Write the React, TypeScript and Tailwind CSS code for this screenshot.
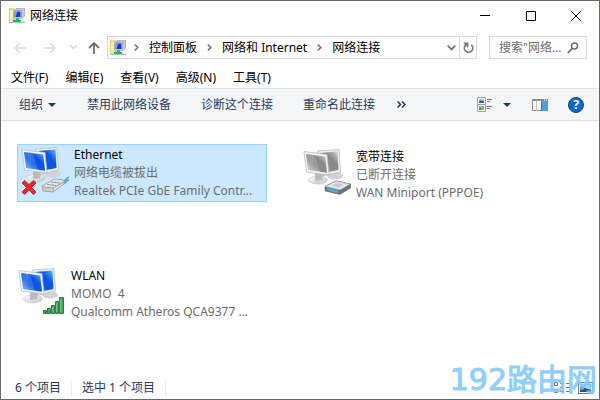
import type { ReactNode } from "react";

function FolderNetIcon() {
  return (
    <svg width="16" height="16" viewBox="0 0 16 16" aria-hidden="true">
      <path d="M0 1h6v11H0z" fill="#f6dc7c" stroke="#cfae45" strokeWidth="0.8" />
      <path d="M1 3l4-2v10l-4 1z" fill="#fdf0a8" />
      <path d="M7 .5l8.5-.3v8L13 10H8z" fill="#c4ccd6" stroke="#8f9aa8" strokeWidth="0.7" />
      <path d="M4.500 2.500h8v7.500h-8z" fill="#dfe5ec" stroke="#8d99a8" strokeWidth="0.7" />
      <path d="M5.500 3.500h6v5.500h-6z" fill="#1238c8" />
      <path d="M5.500 3.500h3l-2 5.500h-1z" fill="#7da5f5" />
      <path d="M7 10h3v3H7z" fill="#1fc27a" />
      <path d="M4 12h8v2.500H4z" fill="#17b56d" />
      <path d="M0 13.500h4v1.500H0zM12 13.500h4v1.500h-4z" fill="#b8bdc2" />
    </svg>
  );
}

function Arrow({ dir }: { dir: "left" | "right" }) {
  return (
    <svg width="12" height="12" viewBox="0 0 12 12" fill="none" stroke="#dcdcdc" strokeWidth="1.5" aria-hidden="true">
      <path d={dir === "left" ? "M12 6H1M6 1L1 6l5 5" : "M0 6h11M6 1l5 5-5 5"} />
    </svg>
  );
}

function Chevron() {
  return (
    <svg width="5" height="7" viewBox="0 0 5 7" fill="none" stroke="#777" strokeWidth="1.6" aria-hidden="true">
      <path d="M.8.6l3 2.900-3 2.900" />
    </svg>
  );
}

function Monitors({ id, tone, children }: { id: string; tone: "blue" | "gray"; children: ReactNode }) {
  const blue = tone === "blue";
  const a = blue ? "#0c55e6" : "#8a8a8a";
  const b = blue ? "#6cbcff" : "#dcdcdc";
  const edge = blue ? "#b8c2ca" : "#b9b9b9";
  return (
    <svg width="48" height="50" viewBox="0 0 48 50" className="shrink-0" aria-hidden="true">
      <defs>
        <linearGradient id={id} x1="0" y1="1" x2="1" y2="0">
          <stop offset="0" stopColor={b} />
          <stop offset="0.4" stopColor={a} />
          <stop offset="0.65" stopColor={a} />
          <stop offset="1" stopColor={b} />
        </linearGradient>
        <linearGradient id={id + "s"} x1="0" y1="0" x2="1" y2="1">
          <stop offset="0" stopColor="#fff" />
          <stop offset="1" stopColor="#c1c4c6" />
        </linearGradient>
      </defs>
      <ellipse cx="32" cy="28" rx="8" ry="3.500" fill="#d0d4d7" />
      <path d="M14.500 3L36 1.500l1.500 22.500-17 4z" fill="#edf0f2" stroke={edge} strokeWidth="0.8" />
      <path d="M17 5l17.500-1.500 1 18.500-15 3z" fill={`url(#${id})`} />
      <ellipse cx="15" cy="32" rx="9.500" ry="4" fill={`url(#${id}s)`} stroke={edge} strokeWidth="0.5" />
      <path d="M12 25l8 1-1 6-7 1z" fill="#b6bbbf" />
      <path d="M1 3.500L24 6.500l2 20.500L3.500 24z" fill="#f4f5f6" stroke={edge} strokeWidth="0.8" />
      <path d="M3 6l19.200 2.500 1.800 16.200L5.200 22z" fill={`url(#${id})`} />
      <path d="M3 6l7 1-1 15.300-3.800-.5z" fill="#fff" opacity="0.18" />
      <path d="M9 7l3 .4 5 16.400-8-1z" fill="#fff" opacity="0.14" />
      {children}
    </svg>
  );
}

function Cable() {
  return (
    <>
      <path d="M41 36c4 0 2-3 7-5M42 38c4 0 2-4 6-4" fill="none" stroke="#4aa8c8" strokeWidth="1.600" />
      <path d="M21 40l12-7 9 1 2 3-12 9-10-1z" fill="#e2e8ea" stroke="#8b959b" strokeWidth="0.8" />
      <path d="M22 41l10 1 11-6M32 42v4M26 38.500l9 1M30 36l9 1" fill="none" stroke="#78858d" strokeWidth="0.8" />
      <path d="M23 42v3M25 42v3M27 42v3M29 43v3" stroke="#a8a07f" strokeWidth="0.8" />
      <path d="M1 37l2.500-2.500L8 38.500l4.500-4L15 37l-4.500 4.500L15 46l-2.500 2.500L8 44l-4.500 4.500L1 46l4.500-4.500z" fill="#ed2428" stroke="#b8181c" strokeWidth="0.8" />
    </>
  );
}

function Modem() {
  return (
    <>
      <path d="M22 38.500l11-5.500 14.500 3v4l-10.500 6.500-15-3.500z" fill="#6d7174" stroke="#55595c" strokeWidth="0.5" />
      <path d="M22 38.500l11-5.500 14.500 3-10.500 6z" fill="#e6e7e8" stroke="#8d9093" strokeWidth="0.6" />
      <path d="M23.500 40.200c4-.4 9 .8 12 3v2L25 42.800z" fill="#54a6cf" />
      <path d="M29 37.500l5-2.500 7 1.500-5 3z" fill="#c5c9cb" />
    </>
  );
}

function Bars() {
  return (
    <g fill="#3fa45b" stroke="#17672e" strokeWidth="0.8">
      <path d="M25.500 43.500h3v3h-3zM29.500 41.500h3v5h-3zM33.500 38.500h3v8h-3zM37.500 34.500h3v12h-3zM41.500 30.500h4v16h-4z" />
      <path d="M38.800 36v9M42.800 32v13M34.800 40v5" stroke="#9ad8a5" />
    </g>
  );
}

function Connection({ className, icon, name, status, device }: { className: string; icon: ReactNode; name: string; status: string; device: string }) {
  return (
    <button className={`flex h-[58px] items-start border pt-px text-left leading-[18px] text-[#6d6d6d] ${className}`}>
      {icon}
      <span className="flex min-w-0 flex-col whitespace-pre">
        <span className="text-black">{name}</span>
        <span>{status}</span>
        <span>{device}</span>
      </span>
    </button>
  );
}

export default function App() {
  return (
    <div className="relative flex min-h-screen flex-col border border-[#6b6966] bg-white font-['Noto_Sans','Noto_Sans_CJK_SC',sans-serif] text-[12px] leading-[18px] text-black">
      <header className="flex h-[30px] items-center pl-2">
        <FolderNetIcon />
        <h1 className="ml-[5px]">网络连接</h1>
        <div className="ml-auto flex">
          <button aria-label="最小化" className="flex h-7 w-[46px] items-center justify-center">
            <svg width="10" height="10" viewBox="0 0 10 10"><path d="M0 4.500h10" stroke="#000" /></svg>
          </button>
          <button aria-label="最大化" className="flex h-7 w-[45px] items-center justify-center">
            <svg width="10" height="10" viewBox="0 0 10 10"><path d="M.5.5h9v9h-9z" fill="none" stroke="#000" /></svg>
          </button>
          <button aria-label="关闭" className="flex h-7 w-[46px] items-center justify-center">
            <svg width="10" height="10" viewBox="0 0 10 10"><path d="M0 0l10 10M10 0L0 10" stroke="#000" /></svg>
          </button>
        </div>
      </header>

      <div className="mt-[5px] flex h-[23px] items-center pr-3 pl-[13px]">
        <button aria-label="后退"><Arrow dir="left" /></button>
        <button aria-label="前进" className="ml-[18px]"><Arrow dir="right" /></button>
        <button aria-label="最近位置" className="ml-[14px]">
          <svg width="7" height="5" viewBox="0 0 7 5" fill="none" stroke="#d5d5d5" strokeWidth="1.500"><path d="M.5.5l3 3 3-3" /></svg>
        </button>
        <button aria-label="上移" className="ml-[11px]">
          <svg width="12" height="12" viewBox="0 0 12 12" fill="none" stroke="#6e6e6e" strokeWidth="1.800"><path d="M6 12V1M1 6l5-5 5 5" /></svg>
        </button>
        <div className="ml-[7px] flex h-[23px] min-w-0 flex-1 items-center border border-[#d9d9d9] pl-[2px]">
          <FolderNetIcon />
          <nav className="ml-2 flex items-center gap-2 whitespace-nowrap">
            <Chevron />
            <a href="#panel" className="mx-[2px]">控制面板</a>
            <Chevron />
            <a href="#network" className="mx-[2px]">网络和 Internet</a>
            <Chevron />
            <a href="#connections" className="mx-[2px]">网络连接</a>
          </nav>
          <button aria-label="历史记录" className="mr-[3px] ml-auto">
            <svg width="9" height="6" viewBox="0 0 9 6" fill="none" stroke="#777" strokeWidth="1.800"><path d="M.7.7l3.800 3.800L8.300.7" /></svg>
          </button>
          <button aria-label="刷新" className="flex h-full w-[17px] items-center justify-center border-l border-[#d9d9d9]">
            <svg width="11" height="12" viewBox="0 0 11 12" fill="none" stroke="#777" strokeWidth="1.700"><path d="M8.200 2.800a4.200 4.200 0 1 1-6 .8L4.300 1.500M.8 1.300h3.800v4" /></svg>
          </button>
        </div>
        <label className="ml-3 flex h-[23px] w-[98px] items-center border border-[#d9d9d9] pl-[9px]">
          <input aria-label="搜索" placeholder={'搜索"网络...'} className="w-[65px] bg-transparent outline-none placeholder:text-[#6d6d6d]" />
          <svg width="12" height="12" viewBox="0 0 12 12" fill="none" stroke="#6d6d6d" className="ml-[3px]" aria-hidden="true"><circle cx="7.500" cy="4" r="3" strokeWidth="1.500" /><path d="M5.300 6.300L.8 10.800" strokeWidth="1.800" /></svg>
        </label>
      </div>

      <nav className="flex h-[29px] items-end gap-[17px] pb-px pl-[10px]">
        <button>文件(F)</button>
        <button>编辑(E)</button>
        <button>查看(V)</button>
        <button>高级(N)</button>
        <button>工具(T)</button>
      </nav>

      <div className="flex h-[33px] items-center border-y border-[#e0e0e0] bg-[#f5f6f7] pr-[15px] pl-[18px] whitespace-nowrap text-[#1e395b]">
        <button className="flex items-center gap-[5px]">
          组织
          <svg width="8" height="4" viewBox="0 0 8 4" aria-hidden="true"><path d="M0 0h8L4 4z" fill="#1e395b" /></svg>
        </button>
        <button className="ml-[31px]">禁用此网络设备</button>
        <button className="ml-[30px]">诊断这个连接</button>
        <button className="ml-[30px]">重命名此连接</button>
        <button aria-label="更多命令" className="ml-[22px]">
          <svg width="9" height="7" viewBox="0 0 9 7" fill="none" stroke="#1e395b" strokeWidth="1.500"><path d="M.5.5l3 3-3 3M5 .5l3 3-3 3" /></svg>
        </button>
        <button aria-label="更改视图" className="ml-auto">
          <svg width="16" height="15" viewBox="0 0 16 15">
            <path d="M.5.5h8v14h-8zM.5 7.500h8" fill="#fff" stroke="#a0a0a0" />
            <path d="M2 2h5v4H2z" fill="#8ec3f0" /><path d="M2 4.500l2-1 3 1V6H2z" fill="#34568b" />
            <path d="M2 9h5v4H2z" fill="#8bbd5b" /><path d="M4 9h3v2H4z" fill="#e9a55c" /><path d="M2 11h2v2H2z" fill="#3b8061" />
            <path d="M10 2.500h5M10 4.500h3M10 9.500h5M10 11.500h3" stroke="#747474" />
          </svg>
        </button>
        <button aria-label="视图选项" className="ml-[10px]">
          <svg width="8" height="4" viewBox="0 0 8 4"><path d="M0 0h8L4 4z" fill="#1e395b" /></svg>
        </button>
        <button aria-label="预览窗格" className="ml-[21px]">
          <svg width="16" height="12" viewBox="0 0 16 12">
            <path d="M.5.500h15v11H.5z" fill="#fff" stroke="#8c8c8c" />
            <path d="M0 0h16v2H0z" fill="#8c8c8c" /><path d="M4.500 2v10" stroke="#c4c4c4" />
            <path d="M9 2h7v10H9z" fill="#4a9fe8" /><path d="M9.500 2v10" stroke="#2b78c0" /><path d="M12 1h1M14 1h1" stroke="#fff" />
          </svg>
        </button>
        <button aria-label="帮助" className="ml-5 flex size-4 items-center justify-center rounded-full border border-[#06468b] bg-[#0c69cf] text-[13px] leading-none font-bold text-white">?</button>
      </div>

      <main className="grid flex-1 grid-cols-[282px_1fr] content-start gap-y-[61px] pt-[23px] pl-4">
        <Connection
          className="w-[250px] gap-[5px] border-[#99d1ff] bg-[#cce8ff] pl-[3px]"
          icon={<Monitors id="eth" tone="blue"><Cable /></Monitors>}
          name="Ethernet" status="网络电缆被拔出" device="Realtek PCIe GbE Family Contr..."
        />
        <Connection
          className="mt-[2px] w-[250px] gap-[5px] border-transparent pl-[3px]"
          icon={<Monitors id="wan" tone="gray"><Modem /></Monitors>}
          name="宽带连接" status="已断开连接" device="WAN Miniport (PPPOE)"
        />
        <Connection
          className="w-[250px] gap-[5px] border-transparent"
          icon={<Monitors id="wlan" tone="blue"><Bars /></Monitors>}
          name="WLAN" status="MOMO  4" device="Qualcomm Atheros QCA9377 ..."
        />
      </main>

      <footer className="flex h-[23px] items-center pr-[6px] pl-[14px] text-[#1e395b]">
        <span className="border-r border-[#ededed] pr-[10px]">6 个项目</span>
        <span className="border-r border-[#ededed] px-[10px]">选中 1 个项目</span>
        <button aria-label="详细信息" className="ml-auto">
          <svg width="16" height="12" viewBox="0 0 16 12" stroke="#777" fill="none"><path d="M.5.5h3v3h-3zM.5 7.500h3v3h-3zM6 1.500h4M12 1.500h4M6 5.500h4M12 5.500h4M6 9.500h4M12 9.500h4" /></svg>
        </button>
        <button aria-label="大图标" className="ml-2">
          <svg width="15" height="12" viewBox="0 0 15 12"><path d="M.5.500h14v11H.5z" fill="#fff" stroke="#777" /><path d="M2 2h11v8H2z" fill="#a8d2f2" /><path d="M2 5l5 1 6 2v2H2z" fill="#344f61" /></svg>
        </button>
      </footer>

      <div className="pointer-events-none absolute right-[2px] bottom-px font-['DejaVu_Sans','Noto_Sans_CJK_SC',sans-serif] text-[30px] leading-[36px] text-[#7cc6fd] opacity-85 [-webkit-text-stroke:1px_#7cc6fd]">192路由网</div>
    </div>
  );
}
